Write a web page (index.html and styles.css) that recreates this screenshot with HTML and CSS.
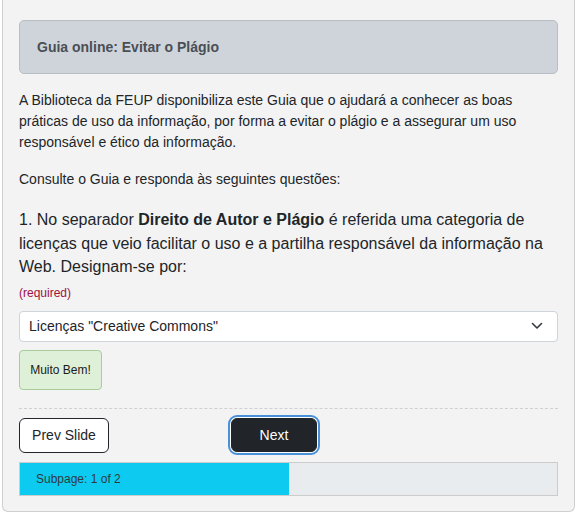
FILE: index.html
```html
<!DOCTYPE html>
<html lang="pt">
<head>
<meta charset="utf-8">
<title>Guia online: Evitar o Plágio</title>
<link rel="stylesheet" href="styles.css">
</head>
<body>
<div class="frame">
  <div class="header"><h1 class="title">Guia online: Evitar o Plágio</h1></div>
  <p class="intro">A Biblioteca da FEUP disponibiliza este Guia que o ajudará a conhecer as boas práticas de uso da informação, por forma a evitar o plágio e a assegurar um uso responsável e ético da informação.</p>
  <p class="intro">Consulte o Guia e responda às seguintes questões:</p>
  <p class="question">1. No separador <strong>Direito de Autor e Plágio</strong> é referida uma categoria de licenças que veio facilitar o uso e a partilha responsável da informação na Web. Designam-se por:</p>
  <div class="required">(required)</div>
  <div class="select">
    <span class="select-text">Licenças "Creative Commons"</span>
    <svg class="chev" width="12" height="8" viewBox="0 0 12 8"><path d="M1.5 1.5 L6 6 L10.5 1.5" fill="none" stroke="#343a40" stroke-width="1.6" stroke-linecap="round" stroke-linejoin="round"/></svg>
  </div>
  <div class="feedback">Muito Bem!</div>
  <hr class="divider">
  <div class="nav">
    <button class="btn btn-prev">Prev Slide</button>
    <button class="btn btn-next">Next</button>
  </div>
  <div class="progress">
    <div class="progress-fill" style="width:50%"></div>
    <span class="progress-label">Subpage: 1 of 2</span>
  </div>
</div>
</body>
</html>
```

FILE: styles.css
```css
* { box-sizing: border-box; }
html, body { margin: 0; padding: 0; background: #ffffff; }
body {
  font-family: "Liberation Sans", Arial, sans-serif;
  color: #212529;
  width: 579px;
  height: 515px;
  overflow: hidden;
}
.frame {
  margin-left: 2px;
  width: 573px;
  background: #f3f3f3;
  border: 1px solid #cfcfcf;
  border-top: none;
  border-radius: 0 0 6px 6px;
  padding: 20px 16px 15px 16px;
}
.header {
  height: 54px;
  background: #cfd4da;
  border: 1px solid #b9bec5;
  border-radius: 5px;
  display: flex;
  align-items: center;
  padding-left: 17px;
}
.title {
  margin: 0;
  font-size: 14px;
  font-weight: bold;
  color: #4a4f55;
}
.intro {
  margin: 16px 0 0 0;
  font-size: 14px;
  line-height: 21px;
}
.question {
  margin: 18px 0 0 0;
  font-size: 16px;
  line-height: 23.5px;
}
.question strong { font-weight: bold; }
.required {
  margin-top: 6px;
  font-size: 12px;
  line-height: 16px;
  color: #a01042;
}
.select {
  margin-top: 10px;
  height: 31px;
  background: #ffffff;
  border: 1px solid #ced4da;
  border-radius: 4px;
  display: flex;
  align-items: center;
  justify-content: space-between;
  padding: 0 14px 0 9px;
}
.select-text { font-size: 14px; color: #212529; }
.chev { display: block; }
.feedback {
  margin-top: 8px;
  width: 83px;
  height: 40px;
  background: #dff0d8;
  border: 1px solid #a9cc9b;
  border-radius: 4px;
  display: flex;
  align-items: center;
  justify-content: center;
  font-size: 12px;
  color: #1a1a1a;
}
.divider {
  margin: 18px 0 0 0;
  border: none;
  border-top: 1px dashed #d0d0d0;
  height: 0;
}
.nav {
  margin-top: 9px;
  display: flex;
  align-items: center;
  gap: 122px;
}
.btn {
  font-family: "Liberation Sans", Arial, sans-serif;
  font-size: 14px;
  border-radius: 6px;
  cursor: pointer;
}
.btn-prev {
  width: 90px;
  height: 35px;
  background: #ffffff;
  border: 1px solid #212529;
  color: #212529;
}
.btn-next {
  width: 86px;
  height: 34px;
  background: #212529;
  border: 1px solid #212529;
  color: #ffffff;
  outline: 2px solid #4a90d9;
  outline-offset: 1px;
  box-shadow: 0 0 0 1px #ffffff;
}
.progress {
  position: relative;
  margin-top: 9px;
  height: 34px;
  background: #e9ecef;
  border: 1px solid #cccccc;
}
.progress-fill {
  height: 100%;
  background: #0dcaf0;
}
.progress-label {
  position: absolute;
  left: 16px;
  top: 0;
  line-height: 32px;
  font-size: 12px;
  color: #2d3a40;
}
```
